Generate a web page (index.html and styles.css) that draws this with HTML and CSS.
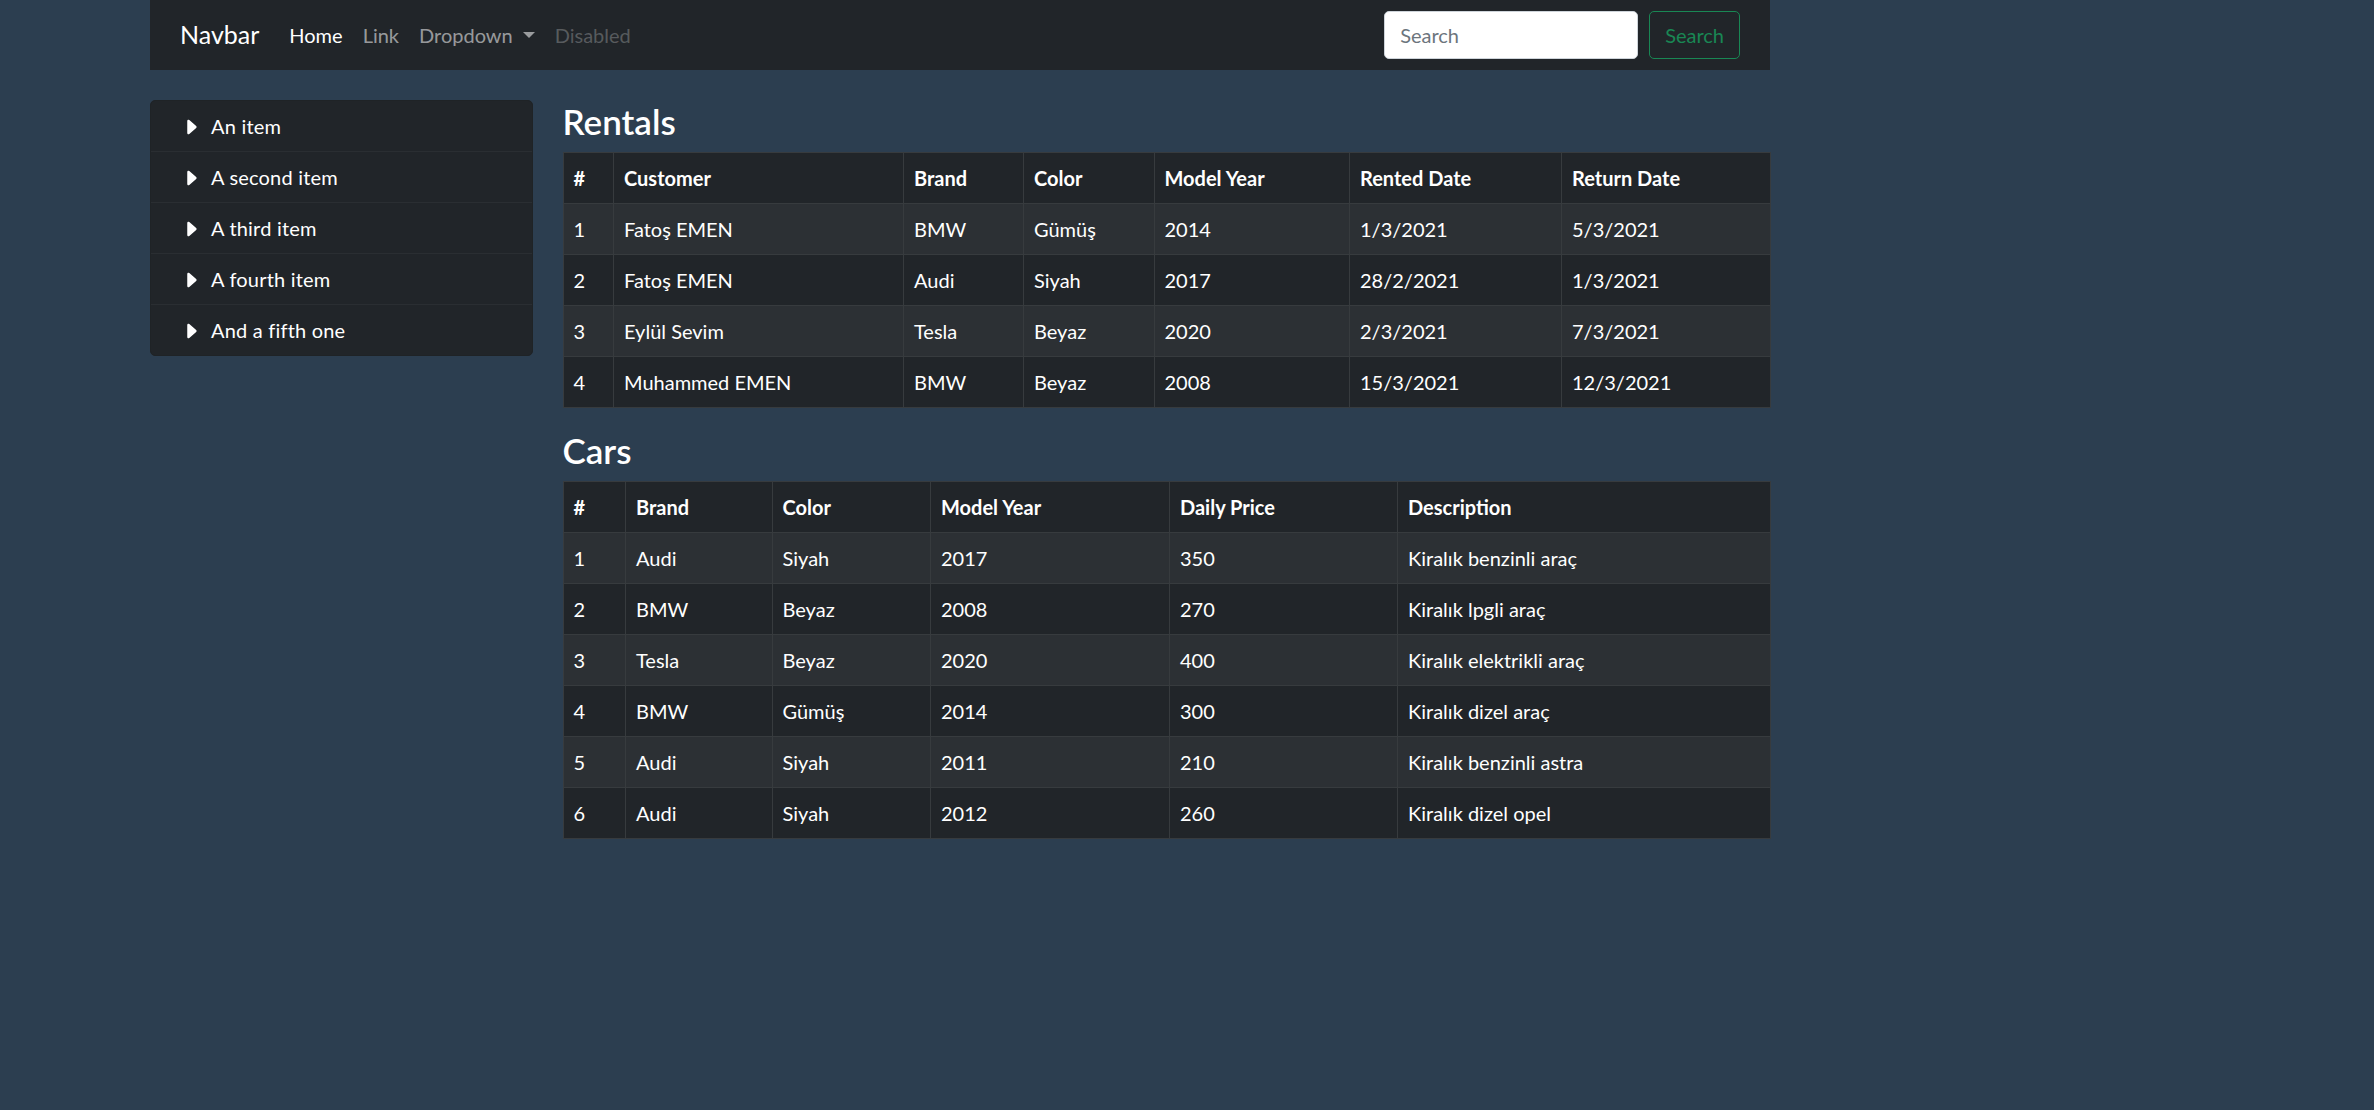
FILE: index.html
```html
<!DOCTYPE html>
<html lang="tr">
<head>
<meta charset="utf-8">
<title>Rentals</title>
<link rel="stylesheet" href="styles.css">
</head>
<body>
<div class="page">
  <nav class="navbar">
    <a class="brand" href="#">Navbar</a>
    <ul class="nav">
      <li><a class="nav-link active" href="#">Home</a></li>
      <li><a class="nav-link" href="#">Link</a></li>
      <li><a class="nav-link dropdown" href="#">Dropdown<span class="caret"></span></a></li>
      <li><a class="nav-link disabled" href="#">Disabled</a></li>
    </ul>
    <form class="search">
      <input class="search-input" type="search" placeholder="Search">
      <button class="search-btn" type="button">Search</button>
    </form>
  </nav>

  <div class="layout">
    <aside class="sidebar">
      <ul class="list-group">
        <li class="list-item"><svg class="caret-icon" viewBox="0 0 16 16"><path d="m12.14 8.753-5.482 4.796c-.646.566-1.658.106-1.658-.753V3.204a1 1 0 0 1 1.659-.753l5.48 4.796a1 1 0 0 1 0 1.506z"/></svg><span>An item</span></li>
        <li class="list-item"><svg class="caret-icon" viewBox="0 0 16 16"><path d="m12.14 8.753-5.482 4.796c-.646.566-1.658.106-1.658-.753V3.204a1 1 0 0 1 1.659-.753l5.48 4.796a1 1 0 0 1 0 1.506z"/></svg><span>A second item</span></li>
        <li class="list-item"><svg class="caret-icon" viewBox="0 0 16 16"><path d="m12.14 8.753-5.482 4.796c-.646.566-1.658.106-1.658-.753V3.204a1 1 0 0 1 1.659-.753l5.48 4.796a1 1 0 0 1 0 1.506z"/></svg><span>A third item</span></li>
        <li class="list-item"><svg class="caret-icon" viewBox="0 0 16 16"><path d="m12.14 8.753-5.482 4.796c-.646.566-1.658.106-1.658-.753V3.204a1 1 0 0 1 1.659-.753l5.48 4.796a1 1 0 0 1 0 1.506z"/></svg><span>A fourth item</span></li>
        <li class="list-item"><svg class="caret-icon" viewBox="0 0 16 16"><path d="m12.14 8.753-5.482 4.796c-.646.566-1.658.106-1.658-.753V3.204a1 1 0 0 1 1.659-.753l5.48 4.796a1 1 0 0 1 0 1.506z"/></svg><span>And a fifth one</span></li>
      </ul>
    </aside>

    <main class="main">
      <h3 class="title">Rentals</h3>
      <table class="table">
        <colgroup>
          <col class="r1"><col class="r2"><col class="r3"><col class="r4"><col class="r5"><col class="r6"><col class="r7">
        </colgroup>
        <thead>
          <tr><th>#</th><th>Customer</th><th>Brand</th><th>Color</th><th>Model Year</th><th>Rented Date</th><th>Return Date</th></tr>
        </thead>
        <tbody>
          <tr><td>1</td><td>Fatoş EMEN</td><td>BMW</td><td>Gümüş</td><td>2014</td><td>1/3/2021</td><td>5/3/2021</td></tr>
          <tr><td>2</td><td>Fatoş EMEN</td><td>Audi</td><td>Siyah</td><td>2017</td><td>28/2/2021</td><td>1/3/2021</td></tr>
          <tr><td>3</td><td>Eylül Sevim</td><td>Tesla</td><td>Beyaz</td><td>2020</td><td>2/3/2021</td><td>7/3/2021</td></tr>
          <tr><td>4</td><td>Muhammed EMEN</td><td>BMW</td><td>Beyaz</td><td>2008</td><td>15/3/2021</td><td>12/3/2021</td></tr>
        </tbody>
      </table>

      <h3 class="title">Cars</h3>
      <table class="table">
        <colgroup>
          <col class="c1"><col class="c2"><col class="c3"><col class="c4"><col class="c5"><col class="c6">
        </colgroup>
        <thead>
          <tr><th>#</th><th>Brand</th><th>Color</th><th>Model Year</th><th>Daily Price</th><th>Description</th></tr>
        </thead>
        <tbody>
          <tr><td>1</td><td>Audi</td><td>Siyah</td><td>2017</td><td>350</td><td>Kiralık benzinli araç</td></tr>
          <tr><td>2</td><td>BMW</td><td>Beyaz</td><td>2008</td><td>270</td><td>Kiralık lpgli araç</td></tr>
          <tr><td>3</td><td>Tesla</td><td>Beyaz</td><td>2020</td><td>400</td><td>Kiralık elektrikli araç</td></tr>
          <tr><td>4</td><td>BMW</td><td>Gümüş</td><td>2014</td><td>300</td><td>Kiralık dizel araç</td></tr>
          <tr><td>5</td><td>Audi</td><td>Siyah</td><td>2011</td><td>210</td><td>Kiralık benzinli astra</td></tr>
          <tr><td>6</td><td>Audi</td><td>Siyah</td><td>2012</td><td>260</td><td>Kiralık dizel opel</td></tr>
        </tbody>
      </table>
    </main>
  </div>
</div>
</body>
</html>
```

FILE: styles.css
```css
* { box-sizing: border-box; }

html, body {
  margin: 0;
  padding: 0;
  background: #2c3e50;
  min-height: 100%;
}

body {
  font-family: "Lato", "Noto Sans", sans-serif;
  font-size: 20px;
  line-height: 30px;
  color: #fff;
}

.page {
  width: 1620px;
  margin-left: 150px;
}

/* Navbar */
.navbar {
  height: 70px;
  background: #212529;
  display: flex;
  align-items: center;
  padding: 0 30px;
}

.brand {
  font-size: 25px;
  line-height: 37.5px;
  color: #fff;
  text-decoration: none;
  margin-right: 20px;
}

.nav {
  display: flex;
  list-style: none;
  margin: 0;
  padding: 0;
}

.nav-link {
  display: block;
  padding: 10px;
  color: rgba(255, 255, 255, 0.55);
  text-decoration: none;
}

.nav-link.active { color: #fff; }
.nav-link.disabled { color: rgba(255, 255, 255, 0.25); }

.caret {
  display: inline-block;
  margin-left: 10px;
  vertical-align: 5px;
  border-top: 6px solid;
  border-right: 6px solid transparent;
  border-left: 6px solid transparent;
}

.search {
  margin-left: auto;
  display: flex;
  gap: 11px;
}

.search-input {
  width: 254px;
  height: 48px;
  padding: 7.5px 15px;
  font: inherit;
  color: #212529;
  background: #fff;
  border: 1px solid #ced4da;
  border-radius: 5px;
}

.search-input::placeholder { color: #6c757d; }

.search-btn {
  height: 48px;
  padding: 7.5px 15px;
  font: inherit;
  color: #198754;
  background: transparent;
  border: 1px solid #198754;
  border-radius: 5px;
}

/* Layout */
.layout {
  display: grid;
  grid-template-columns: 382.5px 1fr;
  column-gap: 30px;
  margin-top: 30px;
}

.list-group {
  list-style: none;
  margin: 0;
  padding: 0;
  background: #212529;
  border: 1px solid #1f2326;
  border-radius: 5px;
  overflow: hidden;
}

.list-item {
  display: flex;
  align-items: center;
  padding: 10px 20px;
  line-height: 30px;
  letter-spacing: 0.2px;
  border-top: 1px solid #2a2e32;
}

.list-item:first-child { border-top: 0; }

.caret-icon {
  width: 20px;
  height: 20px;
  margin: 2px 10px 0;
  fill: #fff;
  flex: none;
}

/* Main */
.title {
  font-size: 35px;
  line-height: 42px;
  font-weight: 600;
  margin: 0 0 10px;
}

.table {
  width: 100%;
  table-layout: fixed;
  border-collapse: collapse;
  margin-bottom: 21px;
  background: #212529;
}

.table th,
.table td {
  padding: 10px;
  line-height: 30px;
  text-align: left;
  border: 1px solid #373b3e;
  white-space: nowrap;
}

.table th { font-weight: 700; }

.table tbody tr:nth-child(odd) { background: #2c3034; }

.r1 { width: 50.5px; }
.r2 { width: 290px; }
.r3 { width: 120px; }
.r4 { width: 130.5px; }
.r5 { width: 195.5px; }
.r6 { width: 212px; }
.r7 { width: 208.5px; }

.c1 { width: 62.5px; }
.c2 { width: 146.5px; }
.c3 { width: 158.5px; }
.c4 { width: 239px; }
.c5 { width: 228px; }
.c6 { width: 372.5px; }
```
